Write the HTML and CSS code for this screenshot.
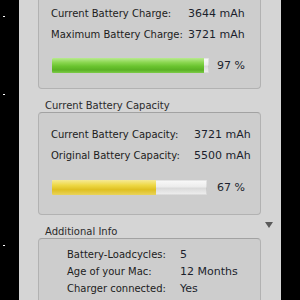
FILE: index.html
```html
<!DOCTYPE html>
<html lang="en">
<head>
    <meta charset="UTF-8">
    <title>Battery Info</title>
    <link rel="stylesheet" href="styles.css">
</head>
<body>

<div class="edge edge-left">
    <span class="tick tick-1"></span>
    <span class="tick tick-2"></span>
    <span class="tick tick-3"></span>
</div>

<div class="panel">
    <div class="box box-charge">
        <div class="rows rows-charge">
            <span class="label">Current Battery Charge:</span>
            <span class="value">3644 mAh</span>
            <span class="label">Maximum Battery Charge:</span>
            <span class="value">3721 mAh</span>
        </div>
        <div class="meter">
            <div class="track"><div class="fill fill-green" style="width: 97%"></div></div>
            <span class="percent">97 %</span>
        </div>
    </div>

    <div class="section-head">
        <span>Current Battery Capacity</span>
    </div>
    <div class="box box-capacity">
        <div class="rows rows-capacity">
            <span class="label">Current Battery Capacity:</span>
            <span class="value">3721 mAh</span>
            <span class="label">Original Battery Capacity:</span>
            <span class="value">5500 mAh</span>
        </div>
        <div class="meter">
            <div class="track"><div class="fill fill-yellow" style="width: 67%"></div></div>
            <span class="percent">67 %</span>
        </div>
    </div>

    <div class="section-head">
        <span>Additional Info</span>
        <span class="toggle"></span>
    </div>
    <div class="box box-info">
        <div class="rows rows-info">
            <span class="label">Battery-Loadcycles:</span>
            <span class="value">5</span>
            <span class="label">Age of your Mac:</span>
            <span class="value">12 Months</span>
            <span class="label">Charger connected:</span>
            <span class="value">Yes</span>
        </div>
    </div>
</div>

<div class="edge"></div>

</body>
</html>
```

FILE: styles.css
```css
body {
    margin: 0;
    height: 300px;
    overflow: hidden;
    display: flex;
    background-color: black;
    font-family: "DejaVu Sans", sans-serif;
    font-size: 10px;
    color: #1c1c1c;
}

.edge {
    width: 19px;
    flex: none;
    background-color: black;
}

.edge-left {
    display: flex;
    flex-direction: column;
}

.tick {
    display: block;
    width: 2px;
    height: 1px;
    margin-left: 3px;
    background-color: #ffffff;
}

.tick-1 {
    margin-top: 16px;
}

.tick-2 {
    margin-top: 77px;
}

.tick-3 {
    margin-top: 150px;
}

.panel {
    width: 262px;
    flex: none;
    background-color: #d5d5d5;
    padding: 0 20px 0 19px;
    box-sizing: border-box;
}

.box {
    border: 1px solid #b2b2b2;
    border-top-color: #a2a2a2;
    border-radius: 4px;
    background-color: #cdcdcd;
}

.box-charge {
    margin-top: -9px;
    padding: 11px 0 15px 12px;
}

.box-capacity {
    padding: 11px 0 19px 12px;
}

.box-info {
    padding: 7px 0 20px 28px;
}

.rows {
    display: grid;
    line-height: 21px;
}

.rows-charge {
    grid-template-columns: 137px auto;
}

.rows-capacity {
    grid-template-columns: 143px auto;
}

.rows-info {
    grid-template-columns: 113px auto;
    line-height: 17px;
}

.value {
    font-size: 11px;
    color: #1b1f2c;
}

.meter {
    display: flex;
    align-items: center;
    margin-top: 13px;
    margin-left: 1px;
}

.box-capacity .meter {
    margin-top: 14px;
}

.track {
    width: 157px;
    height: 15px;
    border-radius: 1px;
    overflow: hidden;
    background: linear-gradient(#fafafa, #ececec 45%, #dadada 55%, #f0f0f0);
    box-shadow: inset 0 0 0 1px rgba(0, 0, 0, 0.08);
}

.box-capacity .track {
    width: 155px;
}

.fill {
    height: 100%;
}

.fill-green {
    background: linear-gradient(#b9ea8f, #8ad650 30%, #6ac42f 55%, #5ab124 80%, #7dcc48);
}

.fill-yellow {
    background: linear-gradient(#f6ea95, #eed845 35%, #dfc021 65%, #e9d35a);
}

.percent {
    margin-left: 8px;
    font-size: 11px;
    color: #1b1f2c;
}

.box-capacity .percent {
    margin-left: 10px;
}

.section-head {
    display: flex;
    justify-content: space-between;
    height: 23px;
    box-sizing: border-box;
    padding: 10px 0 0 7px;
    margin-right: -12px;
    line-height: 13px;
    color: #2a2a2a;
}

.toggle {
    width: 0;
    height: 0;
    margin-top: -3px;
    border-left: 4px solid transparent;
    border-right: 4px solid transparent;
    border-top: 6px solid #5a5a5a;
}
```
